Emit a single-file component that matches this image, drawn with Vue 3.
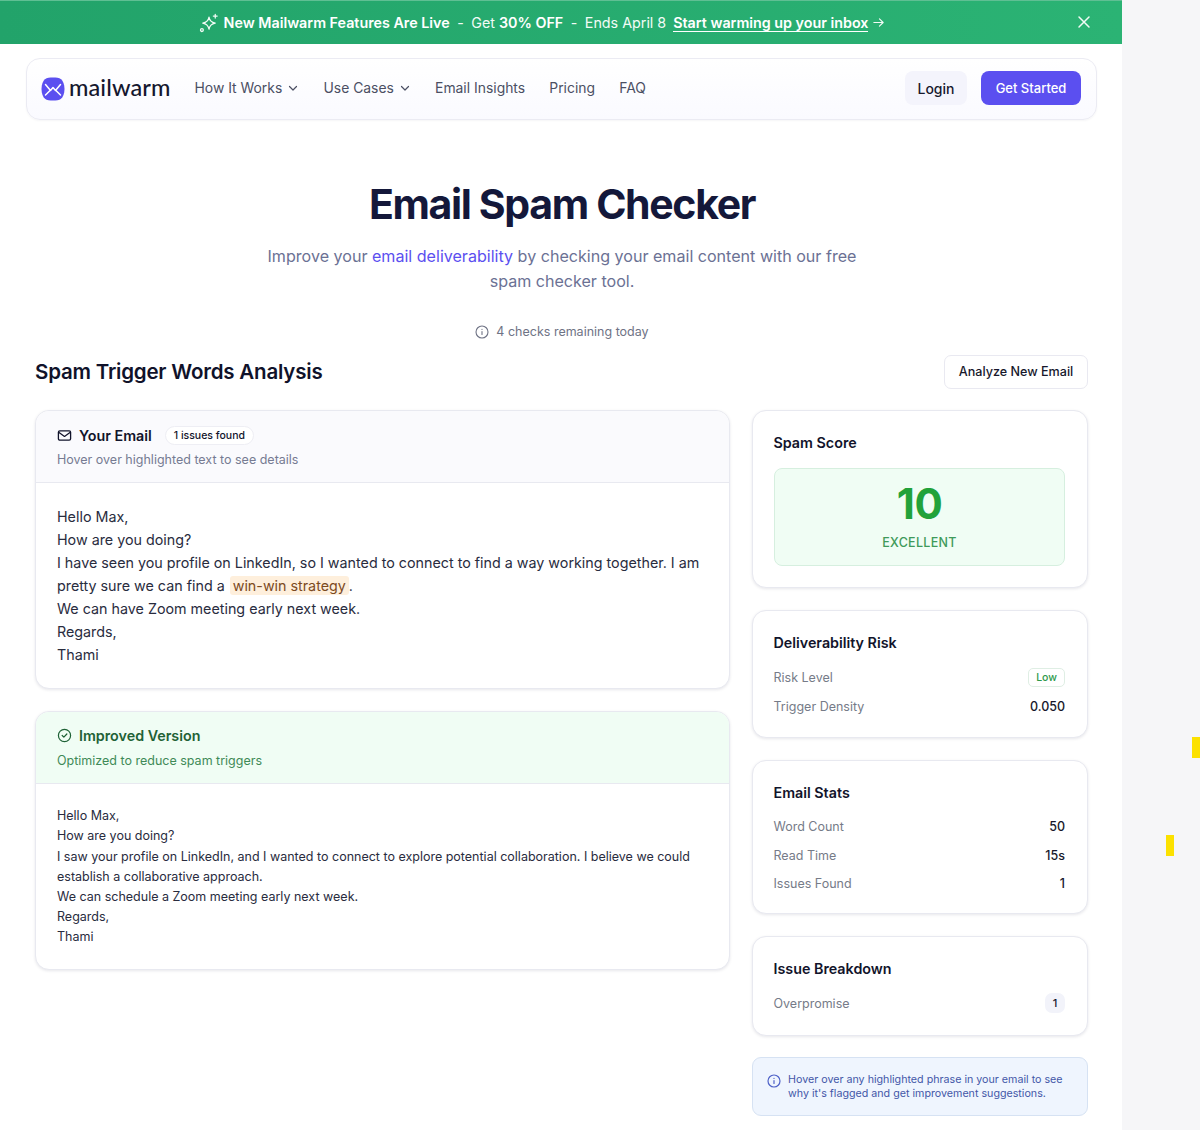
<template>
  <div class="shell">
    <div class="page">
      <!-- promo bar -->
      <div class="promo">
        <svg class="promo-spark" width="20" height="20" viewBox="0 0 24 24" fill="none" stroke="currentColor" stroke-width="1.500" stroke-linecap="round" stroke-linejoin="round">
          <path d="M12 5c.7 4.200 2.800 6.300 7.500 7.200-4.700.9-6.800 3-7.500 7.300-.7-4.300-2.800-6.400-7.500-7.300C9.200 11.300 11.300 9.200 12 5z" />
          <path d="M19.500 1.500v4.500M17.200 3.700h4.600" />
          <circle cx="3.500" cy="20.500" r="1.700" />
        </svg>
        <strong>New Mailwarm Features Are Live</strong>
        <span class="dash">-</span>
        <span>Get <strong>30% OFF</strong></span>
        <span class="dash">-</span>
        <span>Ends April 8</span>
        <a class="promo-link"><strong>Start warming up your inbox</strong></a>
        <svg class="promo-arrow" width="13" height="13" viewBox="0 0 14 14" fill="none" stroke="currentColor" stroke-width="1.200" stroke-linecap="round" stroke-linejoin="round">
          <path d="M2 7h10M8 3l4 4-4 4" />
        </svg>
        <svg class="promo-close" width="14" height="14" viewBox="0 0 14 14" fill="none" stroke="currentColor" stroke-width="1.500" stroke-linecap="round">
          <path d="M2 2l10 10M12 2L2 12" />
        </svg>
      </div>

      <!-- nav -->
      <nav class="nav">
        <div class="logo">
          <svg width="24" height="24" viewBox="0 0 24 24">
            <path d="M12 0.500c3.200 0 6.200.2 8 1.700 2 1.700 3.500 5 3.500 9.800s-1.500 8.100-3.500 9.800c-1.800 1.500-4.800 1.700-8 1.700s-6.200-.2-8-1.700C2 20.100.5 16.800.5 12S2 3.900 4 2.200C5.800.7 8.800.5 12 .5z" fill="#5b4ff0" />
            <path d="M4.500 7.500l5 6 2.500-3 2.500 3 5-6M4.500 18l4.300-4.300M19.500 18l-4.300-4.300" fill="none" stroke="#fff" stroke-width="1.500" stroke-linecap="round" stroke-linejoin="round" />
          </svg>
          <span>mailwarm</span>
        </div>
        <div class="nav-links">
          <a v-for="l in navLinks" :key="l.label" class="nav-link">
            {{ l.label }}
            <svg v-if="l.menu" width="12" height="12" viewBox="0 0 12 12" fill="none" stroke="currentColor" stroke-width="1.200" stroke-linecap="round" stroke-linejoin="round">
              <path d="M2.500 4.500L6 8l3.500-3.500" />
            </svg>
          </a>
        </div>
        <div class="nav-actions">
          <button class="btn-login">Login</button>
          <button class="btn-start">Get Started</button>
        </div>
      </nav>

      <!-- hero -->
      <header class="hero">
        <h1>Email Spam Checker</h1>
        <p>Improve your <a>email deliverability</a> by checking your email content with our free<br />spam checker tool.</p>
        <div class="remaining">
          <svg width="14" height="14" viewBox="0 0 14 14" fill="none" stroke="currentColor" stroke-width="1.100" stroke-linecap="round">
            <circle cx="7" cy="7" r="6" />
            <path d="M7 6.500v3M7 4.400v.1" />
          </svg>
          4 checks remaining today
        </div>
      </header>

      <div class="section-head">
        <h2>Spam Trigger Words Analysis</h2>
        <button class="btn-new">Analyze New Email</button>
      </div>

      <div class="columns">
        <div class="left">
          <section class="card">
            <div class="card-head">
              <div class="card-title">
                <svg width="15" height="15" viewBox="0 0 16 16" fill="none" stroke="currentColor" stroke-width="1.400" stroke-linejoin="round">
                  <rect x="1.500" y="3" width="13" height="10" rx="1.500" />
                  <path d="M1.800 4.500L8 9l6.200-4.500" />
                </svg>
                <span>Your Email</span>
                <span class="issues">1 issues found</span>
              </div>
              <div class="card-sub">Hover over highlighted text to see details</div>
            </div>
            <div class="email">
              Hello Max,<br />
              How are you doing?<br />
              I have seen you profile on LinkedIn, so I wanted to connect to find a way working together. I am pretty sure we can find a <mark>win-win strategy</mark>.<br />
              We can have Zoom meeting early next week.<br />
              Regards,<br />
              Thami
            </div>
          </section>

          <section class="card">
            <div class="card-head green">
              <div class="card-title">
                <svg width="15" height="15" viewBox="0 0 16 16" fill="none" stroke="currentColor" stroke-width="1.300" stroke-linecap="round" stroke-linejoin="round">
                  <circle cx="8" cy="8" r="6.500" />
                  <path d="M5.500 8l1.800 1.800 3.200-3.400" />
                </svg>
                <span>Improved Version</span>
              </div>
              <div class="card-sub">Optimized to reduce spam triggers</div>
            </div>
            <div class="improved">
              Hello Max,<br />
              How are you doing?<br />
              I saw your profile on LinkedIn, and I wanted to connect to explore potential collaboration. I believe we could establish a collaborative approach.<br />
              We can schedule a Zoom meeting early next week.<br />
              Regards,<br />
              Thami
            </div>
          </section>
        </div>

        <aside class="right">
          <section class="card side score-card">
            <h3>Spam Score</h3>
            <div class="score">
              <div class="score-num">10</div>
              <div class="score-label">EXCELLENT</div>
            </div>
          </section>

          <section class="card side risk-card">
            <h3>Deliverability Risk</h3>
            <div class="row">
              <span>Risk Level</span>
              <span class="low">Low</span>
            </div>
            <div class="row">
              <span>Trigger Density</span>
              <b>0.050</b>
            </div>
          </section>

          <section class="card side stats-card">
            <h3>Email Stats</h3>
            <div v-for="s in stats" :key="s.label" class="row">
              <span>{{ s.label }}</span>
              <b>{{ s.value }}</b>
            </div>
          </section>

          <section class="card side breakdown-card">
            <h3>Issue Breakdown</h3>
            <div class="row">
              <span>Overpromise</span>
              <span class="count">1</span>
            </div>
          </section>

          <div class="note">
            <svg width="14" height="14" viewBox="0 0 14 14" fill="none" stroke="currentColor" stroke-width="1.200" stroke-linecap="round">
              <circle cx="7" cy="7" r="6" />
              <path d="M7 6.500v3M7 4.400v.1" />
            </svg>
            <span>Hover over any highlighted phrase in your email to see why it's flagged and get improvement suggestions.</span>
          </div>
        </aside>
      </div>
    </div>

    <div class="strip">
      <i class="marker marker-a"></i>
      <i class="marker marker-b"></i>
    </div>
  </div>
</template>

<script setup>
const navLinks = [
  { label: "How It Works", menu: true },
  { label: "Use Cases", menu: true },
  { label: "Email Insights" },
  { label: "Pricing" },
  { label: "FAQ" },
];

const stats = [
  { label: "Word Count", value: "50" },
  { label: "Read Time", value: "15s" },
  { label: "Issues Found", value: "1" },
];
</script>

<style>
html,
body {
  background: #fff;
}
</style>

<style scoped>
.shell {
  display: flex;
  width: 1200px;
  height: 1130px;
  overflow: hidden;
  font-family: Inter, "Liberation Sans", sans-serif;
  color: #12142b;
}

.shell * {
  box-sizing: border-box;
}

.page {
  width: 1122px;
  flex: none;
}

.strip {
  position: relative;
  flex: 1;
  background: #f6f6f8;
}

.marker {
  position: absolute;
  width: 8px;
  height: 21px;
  background: #fce100;
}

.marker-a {
  left: 70px;
  top: 737px;
}

.marker-b {
  left: 44px;
  top: 835px;
}

/* promo */
.promo {
  position: relative;
  display: flex;
  align-items: center;
  justify-content: center;
  height: 44px;
  padding-right: 38px;
  border-top: 1px solid #5fbf93;
  background: linear-gradient(90deg, #22a36a, #2bb374);
  color: #f2fbf6;
  font-size: 14.300px;
  white-space: nowrap;
}

.promo strong {
  font-weight: 600;
  color: #fff;
}

.promo-spark {
  margin-right: 5px;
}

.dash {
  margin: 0 7.500px;
}

.promo-link {
  margin-left: 7px;
  border-bottom: 1px solid #fff;
  line-height: 17px;
}

.promo-arrow {
  margin-left: 4px;
}

.promo-close {
  position: absolute;
  right: 31px;
  top: 14px;
}

/* nav */
.nav {
  display: flex;
  align-items: center;
  height: 62px;
  margin: 14px 25px 0 26px;
  padding: 0 15px 0 14px;
  border: 1px solid #ebebf3;
  border-radius: 14px;
  background: linear-gradient(180deg, #fff, #fafaff);
  box-shadow: 0 1px 2px rgba(20, 20, 60, 0.04);
}

.logo {
  display: flex;
  align-items: center;
  gap: 4px;
  font-family: Lato, Inter, sans-serif;
  font-size: 23.500px;
  font-weight: 500;
  letter-spacing: 0.1px;
  color: #15172e;
}

.logo span {
  padding-bottom: 5px;
}

.nav-links {
  display: flex;
  align-items: center;
  gap: 24.200px;
  margin-left: 24px;
}

.nav-link {
  display: flex;
  align-items: center;
  gap: 5px;
  padding-bottom: 2px;
  font-size: 13.900px;
  color: #4b4f63;
}

.nav-actions {
  display: flex;
  gap: 14px;
  margin-left: auto;
}

button {
  font-family: inherit;
  cursor: pointer;
}

.btn-login,
.btn-start {
  height: 34px;
  margin-bottom: 2px;
  border: 0;
  border-radius: 8px;
  font-size: 14px;
  font-weight: 500;
}

.btn-login {
  width: 62px;
  background: #f4f4fc;
  color: #17182c;
}

.btn-start {
  width: 100px;
  background: #5b4ff0;
  color: #fff;
  font-size: 13px;
}

/* hero */
.hero {
  padding: 58px 0 0 2px;
  text-align: center;
}

h1 {
  margin: 0;
  font-size: 41px;
  line-height: 52px;
  font-weight: 700;
  letter-spacing: -1.350px;
  color: #14183a;
}

.hero p {
  margin: 14px 0 0;
  font-size: 16.080px;
  line-height: 25px;
  color: #6b7194;
}

.hero p a {
  color: #5b4ff0;
}

.remaining {
  display: flex;
  align-items: center;
  justify-content: center;
  gap: 7px;
  margin-top: 29px;
  font-size: 12.500px;
  line-height: 18px;
  color: #6f7385;
}

.section-head {
  display: flex;
  align-items: center;
  justify-content: space-between;
  margin: 14px 34px 0 35px;
}

h2 {
  margin: 0;
  padding-bottom: 2px;
  font-size: 20.500px;
  font-weight: 600;
  letter-spacing: -0.2px;
  color: #10122a;
}

.btn-new {
  width: 144px;
  height: 34px;
  padding-bottom: 2px;
  border: 1px solid #e9e9f1;
  border-radius: 7px;
  background: #fff;
  color: #17182c;
  font-size: 12.600px;
  font-weight: 500;
}

/* columns */
.columns {
  display: flex;
  gap: 22px;
  margin: 21px 34px 0 35px;
}

.left {
  display: flex;
  flex-direction: column;
  gap: 22px;
  width: 695px;
}

.right {
  display: flex;
  flex-direction: column;
  gap: 22px;
  width: 336px;
}

.card {
  overflow: hidden;
  border: 1px solid #e8e9f0;
  border-radius: 14px;
  background: #fff;
  box-shadow: 0 1px 3px rgba(20, 20, 60, 0.1);
}

.card-head {
  height: 72px;
  padding: 15px 21px 0;
  border-bottom: 1px solid #e8e9f0;
  background: #fafafd;
}

.card-title {
  display: flex;
  align-items: center;
  gap: 6px;
  height: 18px;
  font-size: 14.300px;
  font-weight: 600;
}

.card-title svg {
  margin-right: 1px;
}

.issues {
  margin-left: 7px;
  padding: 0 8px;
  border: 1px solid #eeeef4;
  border-radius: 10px;
  background: #fff;
  font-size: 10.500px;
  line-height: 17px;
  font-weight: 500;
}

.card-sub {
  margin-top: 7px;
  font-size: 12.500px;
  line-height: 18px;
  color: #767b92;
}

.card-head.green {
  background: #f0fdf4;
}

.card-head.green .card-title {
  color: #1f6236;
}

.card-head.green .card-sub {
  color: #3f8a57;
}

.email {
  padding: 21.500px 21px 21.200px;
  font-size: 14.300px;
  line-height: 23.150px;
  color: #292c3e;
}

mark {
  margin: 0 0 0 1.500px;
  padding: 1px 3px 1px 2.500px;
  border-radius: 3px;
  background: #feefdc;
  color: #7c4a1e;
}

.improved {
  padding: 22.500px 21px 21.500px;
  font-size: 12.500px;
  line-height: 20.150px;
  color: #292c3e;
}

/* side cards */
.side {
  padding: 0 22px 0 20.500px;
}

h3 {
  margin: 0;
  font-size: 14.300px;
  line-height: 18px;
  font-weight: 600;
  color: #12142b;
}

.score-card {
  height: 178px;
  padding-top: 23px;
}

.score {
  height: 98px;
  margin: 16px 0 0 0.500px;
  border: 1px solid #d6efdf;
  border-radius: 8px;
  background: #f0fdf4;
  text-align: center;
}

.score-num {
  padding-top: 12px;
  font-size: 42px;
  line-height: 46px;
  font-weight: 700;
  letter-spacing: -0.500px;
  color: #22a23a;
}

.score-label {
  margin-top: 7px;
  font-size: 12.500px;
  line-height: 18px;
  font-weight: 500;
  letter-spacing: 0.3px;
  color: #3f9a5a;
}

.row {
  display: flex;
  align-items: center;
  justify-content: space-between;
  font-size: 12.500px;
  color: #767b88;
}

.row b {
  font-weight: 500;
  font-size: 12.500px;
  color: #17182c;
}

.risk-card {
  height: 128px;
  padding-top: 23px;
}

.risk-card .row {
  height: 19px;
  margin-top: 10px;
}

.risk-card h3 + .row {
  margin-top: 16px;
}

.low {
  padding: 0 7px;
  border: 1px solid #dfeee4;
  border-radius: 5px;
  font-size: 10.500px;
  line-height: 17px;
  font-weight: 500;
  color: #2f9a4c;
}

.stats-card {
  height: 154px;
  padding-top: 23px;
}

.stats-card .row {
  height: 19px;
  margin-top: 9.500px;
}

.stats-card h3 + .row {
  margin-top: 15px;
}

.breakdown-card {
  height: 100px;
  padding-top: 23px;
}

.breakdown-card .row {
  margin-top: 15px;
}

.count {
  width: 20px;
  height: 20px;
  border-radius: 7px;
  background: #f2f3fa;
  font-size: 11px;
  font-weight: 500;
  line-height: 20px;
  text-align: center;
  color: #17182c;
}

.note {
  display: flex;
  align-items: flex-start;
  gap: 7px;
  height: 59px;
  margin-top: -1px;
  padding: 15px 14px 0;
  border: 1px solid #d6e2f3;
  border-radius: 9px;
  background: #eff5fe;
  font-size: 10.700px;
  line-height: 14px;
  color: #4357a8;
}

.note svg {
  flex: none;
  margin-top: 1px;
  color: #4f62c8;
}
</style>
